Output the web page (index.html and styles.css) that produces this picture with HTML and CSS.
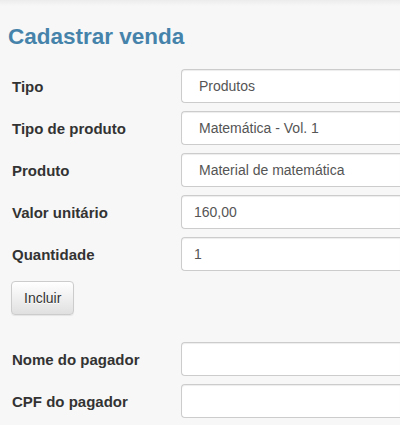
FILE: index.html
```html
<!DOCTYPE html>
<html lang="pt-BR">
<head>
<meta charset="utf-8">
<title>Cadastrar venda</title>
<link rel="stylesheet" href="styles.css">
</head>
<body>
<div class="page">
  <h3 class="title">Cadastrar venda</h3>
  <form class="form">
    <div class="group">
      <div class="row">
        <label class="label">Tipo</label>
        <select class="control select"><option>Produtos</option></select>
      </div>
      <div class="row">
        <label class="label">Tipo de produto</label>
        <select class="control select"><option>Matemática - Vol. 1</option></select>
      </div>
      <div class="row">
        <label class="label">Produto</label>
        <select class="control select"><option>Material de matemática</option></select>
      </div>
      <div class="row">
        <label class="label">Valor unitário</label>
        <input class="control" type="text" value="160,00">
      </div>
      <div class="row">
        <label class="label">Quantidade</label>
        <input class="control" type="text" value="1">
      </div>
    </div>
    <div class="actions">
      <button type="button" class="btn">Incluir</button>
    </div>
    <div class="group">
      <div class="row">
        <label class="label">Nome do pagador</label>
        <input class="control" type="text" value="">
      </div>
      <div class="row">
        <label class="label">CPF do pagador</label>
        <input class="control" type="text" value="">
      </div>
    </div>
  </form>
</div>
</body>
</html>
```
FILE: styles.css
```css
html, body {
  margin: 0;
  padding: 0;
  overflow: hidden;
}
body {
  background: #f7f7f7;
  font-family: "Liberation Sans", Arial, sans-serif;
  color: #333;
}
.page {
  background: linear-gradient(to bottom, #ececec 0px, #f7f7f7 6px, #f7f7f7 100%);
  height: 425px;
  box-sizing: border-box;
  padding-top: 25px;
}
.title {
  margin: 0 0 20px 0;
  padding-left: 8px;
  font-size: 22.5px;
  line-height: 24px;
  font-weight: bold;
  color: #4683ab;
}
.form {
  display: flex;
  flex-direction: column;
}
.group {
  display: flex;
  flex-direction: column;
  gap: 8px;
}
.row {
  display: flex;
  align-items: center;
}
.label {
  width: 181px;
  flex: none;
  box-sizing: border-box;
  padding-left: 12px;
  font-size: 15px;
  font-weight: bold;
  color: #333;
}
.control {
  flex: 1;
  min-width: 0;
  height: 34px;
  box-sizing: border-box;
  margin: 0;
  padding: 6px 12px;
  border: 1px solid #ccc;
  border-right-width: 0;
  border-radius: 4px 0 0 4px;
  background: #fff;
  box-shadow: inset 0 1px 1px rgba(0, 0, 0, 0.075);
  font-family: "Liberation Sans", Arial, sans-serif;
  font-size: 14px;
  color: #555;
  outline: none;
}
.select {
  -webkit-appearance: none;
  appearance: none;
  padding-left: 17px;
}
.actions {
  padding: 10px 0 27px 11px;
}
.btn {
  display: inline-block;
  height: 34px;
  box-sizing: border-box;
  margin: 0;
  padding: 6px 12px;
  border: 1px solid #ccc;
  border-radius: 4px;
  background: linear-gradient(to bottom, #ffffff 0%, #e0e0e0 100%);
  box-shadow: inset 0 1px 0 rgba(255, 255, 255, 0.15), 0 1px 1px rgba(0, 0, 0, 0.075);
  font-family: "Liberation Sans", Arial, sans-serif;
  font-size: 14px;
  line-height: 20px;
  color: #333;
  text-shadow: 0 1px 0 #fff;
}
```
